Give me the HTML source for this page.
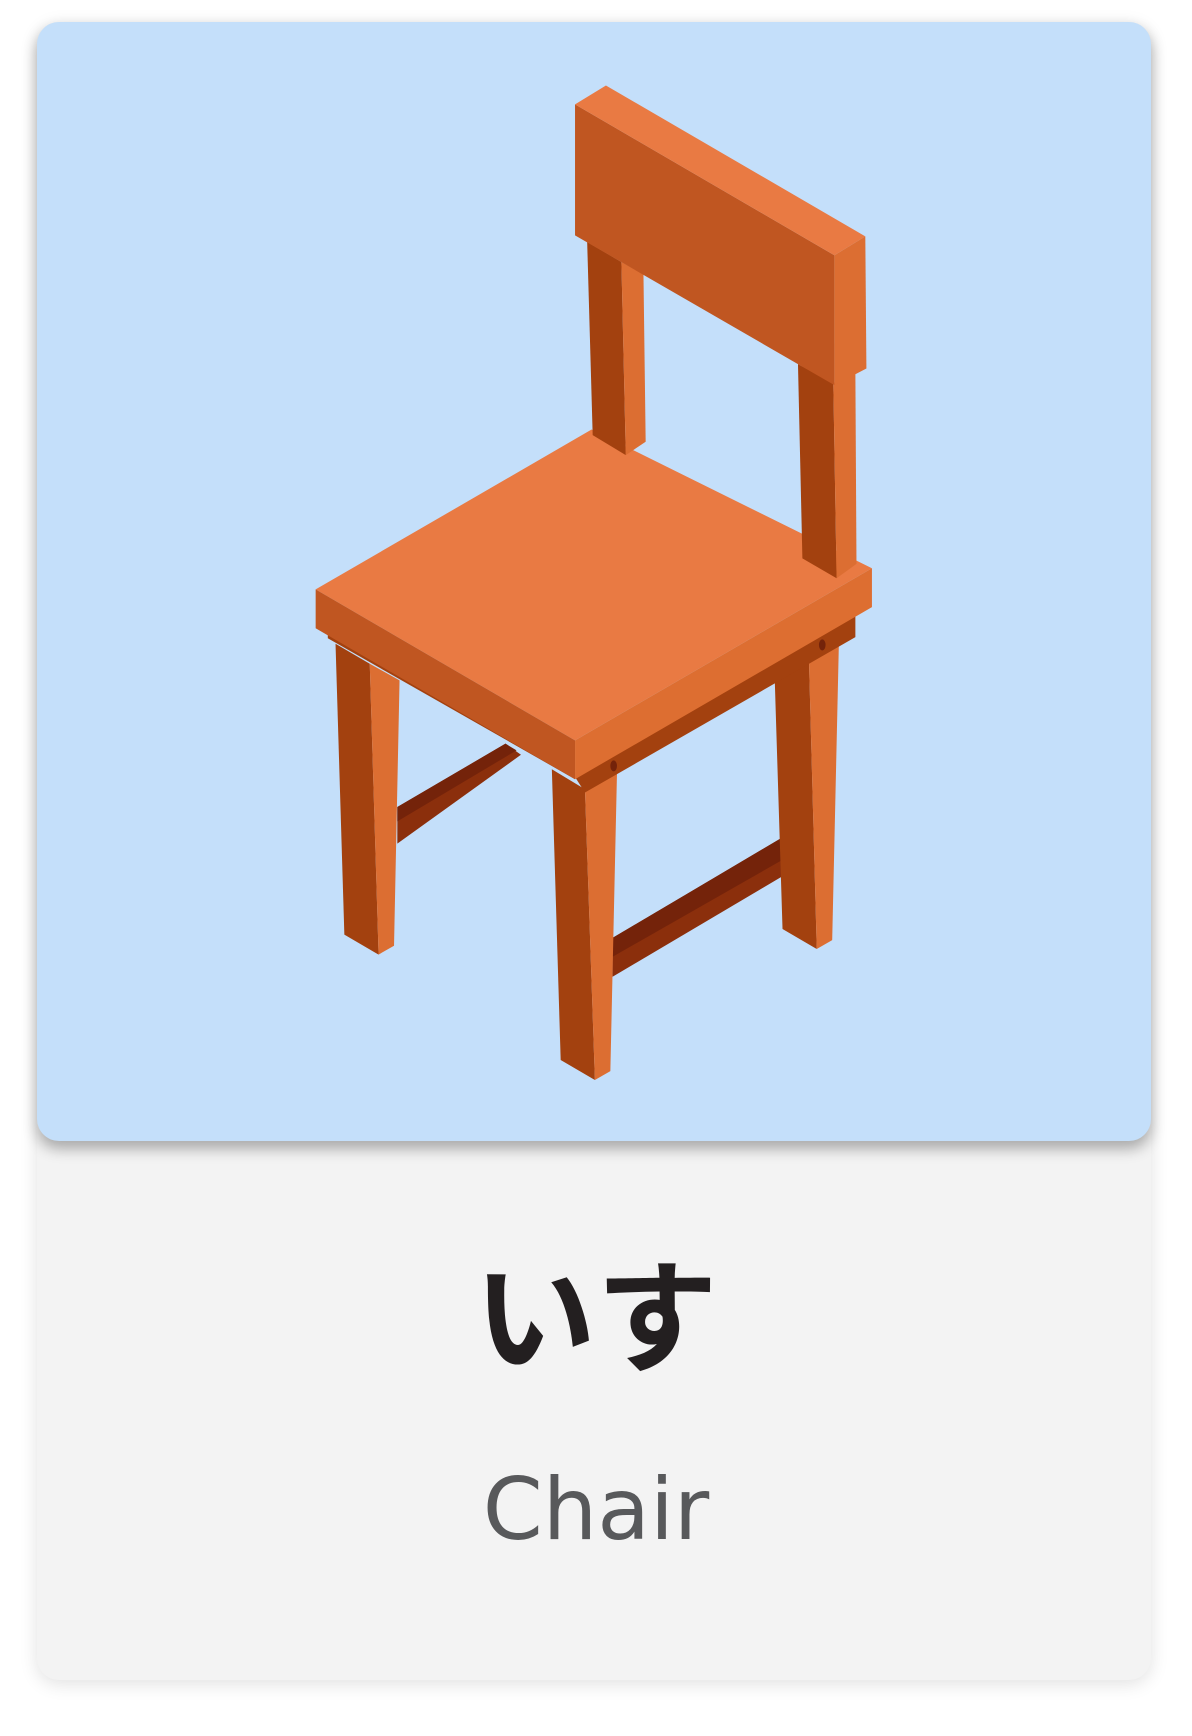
<!DOCTYPE html>
<html><head><meta charset="utf-8"><style>
html,body{margin:0;padding:0;background:#fff;}
body{width:1192px;height:1736px;position:relative;overflow:hidden;font-family:"Liberation Sans","Noto Sans CJK JP",sans-serif;}
.card{position:absolute;left:37px;top:22px;width:1114px;height:1658px;background:#f3f3f3;border-radius:22px;box-shadow:0 4px 18px rgba(0,0,0,0.12);}
.blue{position:absolute;left:37px;top:22px;width:1114px;height:1119px;background:#c4dffa;border-radius:22px;box-shadow:0 8px 14px rgba(0,0,0,0.3);}
svg{position:absolute;left:0;top:0;}
.jp{position:absolute;left:0;width:1192px;top:1240px;text-align:center;font-family:"Noto Sans CJK JP",sans-serif;font-weight:bold;font-size:122px;line-height:140px;color:#231f20;}
.en{position:absolute;left:0;width:1192px;top:1455px;text-align:center;font-family:"DejaVu Sans","Liberation Sans",sans-serif;font-size:86px;line-height:110px;color:#58595b;}
</style></head><body>
<div class="card"></div>
<div class="blue"></div>
<svg width="1192" height="1736" viewBox="0 0 1080 1564" preserveAspectRatio="none">
<polygon points="360,727 458,670 472,680 360,760" fill="#8b2f0c"/>
<polygon points="360,727 458,670 468,676 360,740" fill="#74230a"/>
<polygon points="555,845 708,755 730,768 725,780 555,880" fill="#8b2f0c"/>
<polygon points="555,845 708,755 726,765 555,862" fill="#74230a"/>
<polygon points="304,580 312,842 343,860 335,598" fill="#a3410f"/>
<polygon points="335,598 362,613 357,852 343,860" fill="#dc6e32"/>
<polygon points="702,614 709,837 740,855 733,597" fill="#a3410f"/>
<polygon points="733,597 760,582 754,847 740,855" fill="#dc6e32"/>
<polygon points="500,693 508,955 539,973 530,711" fill="#a3410f"/>
<polygon points="530,711 559,697 553,965 539,973" fill="#dc6e32"/>
<polygon points="297,566 521,695 521,702 297,575" fill="#a3410f"/>
<polygon points="521,700 775,553 775,574 530,714" fill="#a3410f"/>
<polygon points="286,531 536,387 790,512 521,667" fill="#e97a43"/>
<polygon points="286,531 521,667 521,702 286,566" fill="#c05621"/>
<polygon points="521,667 790,512 790,547 521,702" fill="#dd6e31"/>
<ellipse cx="556" cy="690" rx="3" ry="5" fill="#74230a"/>
<ellipse cx="745" cy="581" rx="3" ry="5" fill="#74230a"/>
<polygon points="532,218 537,392 567,410 563,236" fill="#a3410f"/>
<polygon points="563,236 583,247 585,398 567,410" fill="#dc6e32"/>
<polygon points="723,328 727,503 758,521 755,345" fill="#a3410f"/>
<polygon points="755,345 775,335 776,508 758,521" fill="#dc6e32"/>
<polygon points="521,94 756,230 756,347 521,212" fill="#c05621"/>
<polygon points="521,94 549,77 784,213 756,230" fill="#e97a43"/>
<polygon points="756,230 784,213 785,332 756,347" fill="#dc6e32"/>
</svg>
<div class="jp">いす</div>
<div class="en">Chair</div>
</body></html>
